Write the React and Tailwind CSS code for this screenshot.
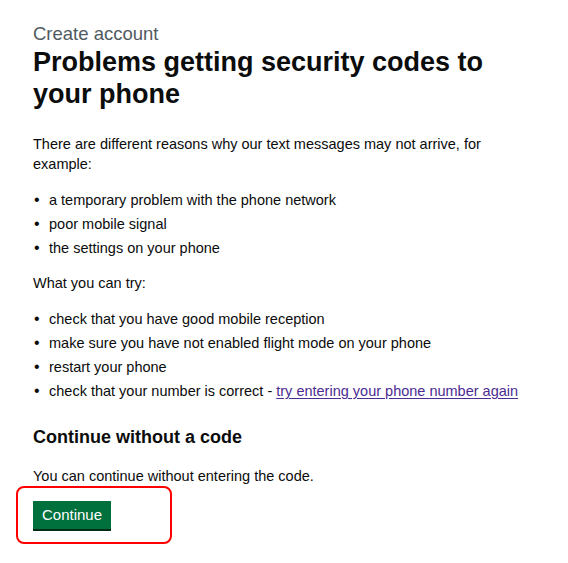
export default function App() {
  const font = { fontFamily: '"Liberation Sans", Arial, sans-serif' };
  const Bullet = () => <span className="w-[16px] shrink-0 pl-[1px] text-[16px]">•</span>;
  return (
    <div className="min-h-[563px] w-[568px] bg-white pl-[33px] pt-[21px] text-[#0b0c0c]" style={font}>
      <span className="block text-[18.5px] leading-[25px] text-[#505a5f]">Create account</span>
      <h1 className="w-[500px] text-[27px] font-bold leading-[32px]">
        Problems getting security codes to your phone
      </h1>
      <p className="mt-[24px] w-[460px] text-[14.5px] leading-[20px]">
        There are different reasons why our text messages may not arrive, for example:
      </p>
      <ul className="mt-[16px] text-[14.5px] leading-[20px]">
        {["a temporary problem with the phone network", "poor mobile signal", "the settings on your phone"].map((t) => (
          <li key={t} className="mb-[4px] flex">
            <Bullet />
            <span>{t}</span>
          </li>
        ))}
      </ul>
      <p className="mt-[15px] text-[14.5px] leading-[20px]">What you can try:</p>
      <ul className="mt-[16px] text-[14.5px] leading-[20px]">
        <li className="mb-[4px] flex">
          <Bullet />
          <span>check that you have good mobile reception</span>
        </li>
        <li className="mb-[4px] flex">
          <Bullet />
          <span>make sure you have not enabled flight mode on your phone</span>
        </li>
        <li className="mb-[4px] flex">
          <Bullet />
          <span>restart your phone</span>
        </li>
        <li className="mb-[4px] flex">
          <Bullet />
          <span>
            check that your number is correct -{" "}
            <a href="#" className="text-[#4c2c92] underline underline-offset-2">
              try entering your phone number again
            </a>
          </span>
        </li>
      </ul>
      <h2 className="mt-[24px] text-[18px] font-bold leading-[25px]">Continue without a code</h2>
      <p className="mt-[16px] text-[14.5px] leading-[20px]">You can continue without entering the code.</p>
      <div className="mt-0 -ml-[17px] h-[58px] w-[156px] rounded-[8px] border-2 border-[#ff0000] pl-[15px] pt-[13px]">
        <button className="h-[28px] bg-[#00703c] px-[9px] text-[15px] leading-[28px] text-white shadow-[0_2px_0_#002d18]">
          Continue
        </button>
      </div>
    </div>
  );
}
